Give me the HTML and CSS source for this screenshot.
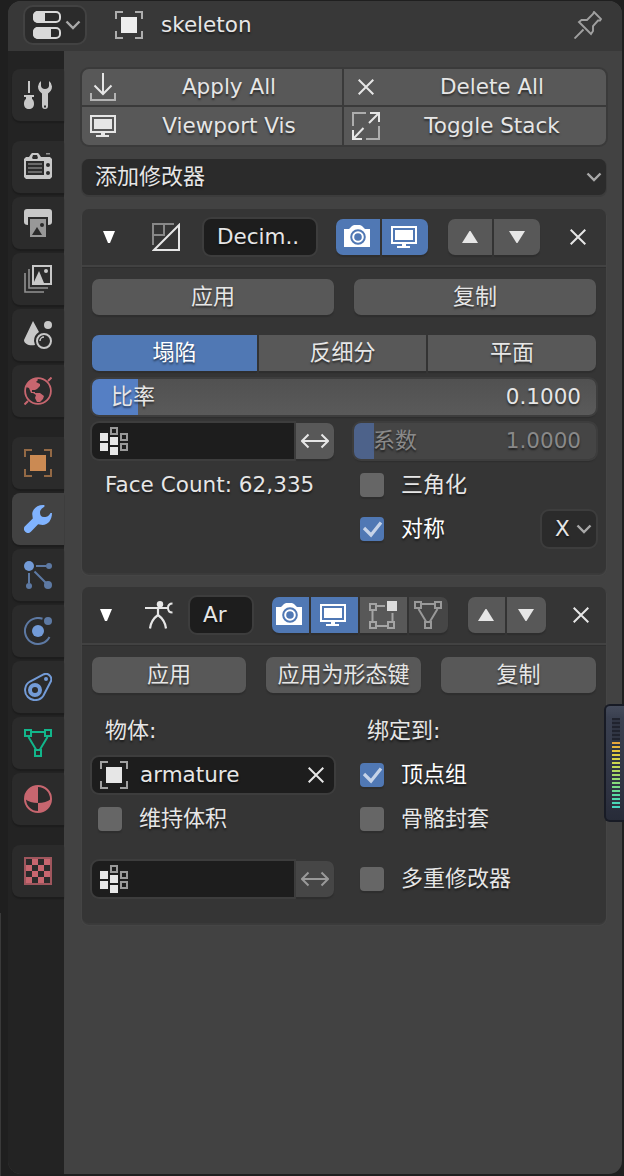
FILE: index.html
```html
<!DOCTYPE html>
<html lang="zh-CN">
<head>
<meta charset="utf-8">
<title>skeleton</title>
<link rel="stylesheet" href="styles.css">
</head>
<body>
<svg class="sprite" width="0" height="0">
  <symbol id="editor" viewBox="0 0 28 28"><rect x="1" y="1" width="26" height="10" rx="4" fill="none" stroke="#d9d9d9" stroke-width="2"/><path d="M5 0h7v12H5a5 5 0 0 1-5-5V5a5 5 0 0 1 5-5z" fill="#d9d9d9"/><rect x="1" y="17" width="26" height="10" rx="4" fill="none" stroke="#d9d9d9" stroke-width="2"/><path d="M5 16h13v12H5a5 5 0 0 1-5-5v-2a5 5 0 0 1 5-5z" fill="#d9d9d9"/></symbol>
  <symbol id="object" viewBox="0 0 28 28"><path d="M1 8V1h7M20 1h7v7M27 20v7h-7M8 27H1v-7" fill="none" stroke="currentColor" stroke-width="2" opacity=".65"/><path d="M6 6h16v16H6z" fill="currentColor"/></symbol>
  <symbol id="pin" viewBox="0 0 28 28"><path d="M20 1l7 7-1 1.500h-2L19 15v5l-2 3L5 11l2.500-2H13l6-6zM9.500 18.500L.5 27.500" fill="none" stroke="#a0a0a0" stroke-width="1.900"/></symbol>
  <symbol id="chev" viewBox="0 0 16 10"><path d="M1.500 1.500l6.500 6.500 6.500-6.500" fill="none" stroke="currentColor" stroke-width="2.400"/></symbol>
  <symbol id="tools" viewBox="0 0 28 28"><path d="M4 0h2v12H4zM0 14h10v2H8v2c1.500 1 2 2.500 2 5 0 3-2 5-5 5s-5-2-5-5c0-2.500.5-4 2-5v-2H0z"/><path fill-rule="evenodd" d="M17 0a7 7 0 0 0-3 5.500c0 3.500 1.500 5 4 7V25a3 3 0 0 0 6 0V12.500c2.500-2 4-3.500 4-7A7 7 0 0 0 25 0v4.500c0 2-1.500 3.500-4 3.500s-4-1.500-4-3.500zM20 24.500h2v2h-2z"/></symbol>
  <symbol id="render" viewBox="0 0 28 28"><path fill-rule="evenodd" d="M2 4h3l2-3 1-1h6l1 1 2 3h9l2 2v18l-2 2H2l-2-2V6zM9 2L8 5l1 1h4l1-1-1-3zM2 8v14h18V8z"/><path d="M22 0h4v1.500h-4z" opacity=".65"/><path d="M4 11h14M4 15h14M4 19h14" stroke="currentColor" stroke-width="1.800" opacity=".4"/><circle cx="24" cy="12" r="2" fill="#2b2b2b"/><circle cx="24" cy="20" r="2" fill="#2b2b2b"/></symbol>
  <symbol id="output" viewBox="0 0 28 28"><path d="M3 0h22a3 3 0 0 1 3 3v10q0 3-4 3V8H4v8q-4 0-4-3V3a3 3 0 0 1 3-3z"/><path d="M6 10h16v18H6z" opacity=".7"/><path d="M8 26l5-8 5 8z" fill="#2b2b2b"/><circle cx="18" cy="16" r="2" fill="#2b2b2b"/></symbol>
  <symbol id="layers" viewBox="0 0 28 28"><path d="M9 1h18v18H9z" fill="none" stroke="currentColor" stroke-width="2"/><path d="M9.500 18l5.500-12 5 12z"/><circle cx="22" cy="6" r="2"/><path d="M5 4v19h19M1 8v19h19" fill="none" stroke="currentColor" stroke-width="1.600" opacity=".65"/></symbol>
  <symbol id="scene" viewBox="0 0 28 28"><path d="M9 0l6 11q-5 3-5 9l1 4C5 25 0 23 0 19z"/><circle cx="24" cy="4" r="4"/><circle cx="20" cy="20" r="7" fill="none" stroke="currentColor" stroke-width="2"/><path d="M16 20a4 4 0 0 1 4-4" fill="none" stroke="currentColor" stroke-width="1.500"/></symbol>
  <symbol id="world" viewBox="0 0 28 28"><circle cx="14" cy="14" r="12.900" fill="none" stroke="currentColor" stroke-width="1.800"/><path d="M24 4l3.500-3.500M4 24L.5 27.500" stroke="currentColor" stroke-width="2"/><path d="M2 10C3 5 8 1 13 1.500l1 1.500-2 2 4 2v2l-3 3-2 1H8v2h3v1h5l4 3-1 3-3 3h-3l-2-4 1-3-3-2H7l-2-5z"/></symbol>
  <symbol id="wrench" viewBox="0 0 28 28"><path d="M20.500.2C14-.5 8.500 3.500 8.200 9l.6 4.500L1.200 21a4 4 0 0 0 5.700 5.700l7.200-7.500 4.400.7c5.500 0 9.500-5 9.500-12L26.500 8c-2 4-4.500 4-6.500 4-3 0-4-2-4-4.500 0-3 2-4 4.500-6z"/></symbol>
  <symbol id="particles" viewBox="0 0 28 28"><circle cx="5" cy="5" r="5"/><g opacity=".7"><circle cx="25" cy="5" r="3"/><circle cx="5" cy="25" r="3"/><circle cx="24" cy="24" r="4"/><path d="M12 5h10M5 12v10M10.500 10.500L22 22" stroke="currentColor" stroke-width="2"/></g></symbol>
  <symbol id="physics" viewBox="0 0 28 28"><circle cx="14" cy="14" r="6"/><g opacity=".7"><path d="M18.500 1.800A13 13 0 1 0 25.500 20" fill="none" stroke="currentColor" stroke-width="2"/><circle cx="24" cy="4" r="4"/></g></symbol>
  <symbol id="constraint" viewBox="0 0 28 28"><path d="M20 1.200L6 8.500A10 10 0 1 0 19.500 22.500L26.500 9A5.400 5.400 0 0 0 20 1.200z" fill="none" stroke="currentColor" stroke-width="2"/><circle cx="11" cy="17" r="5" fill="none" stroke="currentColor" stroke-width="4"/><circle cx="22" cy="6" r="2"/></symbol>
  <symbol id="mesh" viewBox="0 0 28 28"><path d="M1 1h6v6H1zM21 1h6v6h-6zM11 21h6v6h-6zM8 3h12M4.500 8L12 20.500M23.500 8L16 20.500" fill="none" stroke="currentColor" stroke-width="2"/></symbol>
  <symbol id="material" viewBox="0 0 28 28"><circle cx="14" cy="14" r="13" fill="none" stroke="currentColor" stroke-width="2"/><path d="M14 1v17Q6 18 1 14A13 13 0 0 1 14 1zM14 18q8 0 13-4a13 13 0 0 1-13 13z"/></symbol>
  <symbol id="texture" viewBox="0 0 28 28"><path d="M1 1h26v26H1z" fill="none" stroke="currentColor" stroke-width="2" opacity=".75"/><path d="M8 2h6v6H8zM20 2h6v6h-6zM2 8h6v6H2zM14 8h6v6h-6zM8 14h6v6H8zM20 14h6v6h-6zM2 20h6v6H2zM14 20h6v6h-6z"/></symbol>
  <symbol id="import" viewBox="0 0 28 28"><path d="M13 0v21M4.500 12.500L13 21l8.500-8.500" fill="none" stroke="currentColor" stroke-width="2"/><path d="M1 20v7h24v-7" fill="none" stroke="currentColor" stroke-width="2" opacity=".65"/></symbol>
  <symbol id="screen" viewBox="0 0 28 28"><path d="M1 4h24v16H1z" fill="none" stroke="currentColor" stroke-width="2"/><path d="M4 7h18v10H4zM11 20h4v3h4v2H6v-2h5z"/></symbol>
  <symbol id="expand" viewBox="0 0 28 28"><path d="M1 14V1h13M27 14v13H14" fill="none" stroke="currentColor" stroke-width="2" opacity=".6"/><path d="M18 1h9v9M27 1L17 11M1 18v9h9M1 27l10.500-11" fill="none" stroke="currentColor" stroke-width="2"/></symbol>
  <symbol id="close" viewBox="0 0 16 16"><path d="M.7.7l14.600 14.600M15.300.7L.7 15.300" fill="none" stroke="currentColor" stroke-width="2"/></symbol>
  <symbol id="decimate" viewBox="0 0 28 28"><path d="M22 1H1v21M12 1v11H1" fill="none" stroke="#888" stroke-width="2"/><path d="M27 2v25H2z" fill="none" stroke="currentColor" stroke-width="2"/></symbol>
  <symbol id="armature" viewBox="0 0 28 28"><circle cx="15" cy="3.200" r="3.200"/><path d="M0 7h19M13 8v6q-7 5-8 13.500M13 14q7 5 8 13.500" fill="none" stroke="currentColor" stroke-width="2.200"/><path d="M27.500 2.500q-4.500 0-4.500 4.500t4.500 4.500M18 7h5" fill="none" stroke="currentColor" stroke-width="2"/></symbol>
  <symbol id="camera" viewBox="0 0 28 28"><path d="M0 6h5l3-3 2-1h6l2 1 3 3h5v18H0z"/><circle cx="14" cy="14" r="6.800" fill="none" stroke="#5078b4" stroke-width="2"/><circle cx="14" cy="14" r="3.800" fill="#5078b4"/></symbol>
  <symbol id="editmode" viewBox="0 0 28 28"><path d="M1 3h6v6H1zM1 21h6v6H1zM19 21h6v6h-6zM8 5h8M3.500 10v10M8 25h10M23.500 12v8" fill="none" stroke="#a4a4a4" stroke-width="2"/><path d="M18 0h10v10H18z" fill="#ddd"/></symbol>
  <symbol id="vgroup" viewBox="0 0 28 28"><path d="M0 6h8v8H0zM0 16h8v8H0zM10 10h8v8h-8zM10 20h8v8h-8z"/><path d="M11 1h6v6h-6zM21 7h6v6h-6zM21 17h6v6h-6z" fill="none" stroke="#999" stroke-width="2"/></symbol>
  <symbol id="swap" viewBox="0 0 28 28"><path d="M1 14h26M7.500 7.500L1 14l6.500 6.500M20.500 7.500L27 14l-6.500 6.500" fill="none" stroke="currentColor" stroke-width="2"/></symbol>
  <symbol id="fold" viewBox="0 0 12 12"><path d="M0 0h12L7 12H5z"/></symbol>
  <symbol id="down" viewBox="0 0 16 12"><path d="M0 0h16L8.500 12h-1z"/></symbol>
  <symbol id="up" viewBox="0 0 16 12"><path d="M7.500 0h1L16 12H0z"/></symbol>
  <symbol id="check" viewBox="0 0 24 24"><path d="M4 11l7 7L21 5.500" fill="none" stroke="#c6d3e8" stroke-width="3.200"/></symbol>
</svg>

<div class="window">
  <header class="topbar">
    <div class="editor-select"><svg class="icon"><use href="#editor"/></svg><svg class="chev"><use href="#chev"/></svg></div>
    <svg class="icon crumb-icon"><use href="#object"/></svg>
    <span class="crumb latin">skeleton</span>
    <svg class="icon"><use href="#pin"/></svg>
  </header>
  <div class="body">
    <nav class="tabs">
      <div class="tab"><svg class="icon"><use href="#tools"/></svg></div>
      <div class="tab gap"><svg class="icon"><use href="#render"/></svg></div>
      <div class="tab"><svg class="icon"><use href="#output"/></svg></div>
      <div class="tab"><svg class="icon"><use href="#layers"/></svg></div>
      <div class="tab"><svg class="icon"><use href="#scene"/></svg></div>
      <div class="tab red"><svg class="icon"><use href="#world"/></svg></div>
      <div class="tab gap orange"><svg class="icon"><use href="#object"/></svg></div>
      <div class="tab active"><svg class="icon"><use href="#wrench"/></svg></div>
      <div class="tab blue"><svg class="icon"><use href="#particles"/></svg></div>
      <div class="tab blue"><svg class="icon"><use href="#physics"/></svg></div>
      <div class="tab blue"><svg class="icon"><use href="#constraint"/></svg></div>
      <div class="tab green"><svg class="icon"><use href="#mesh"/></svg></div>
      <div class="tab red"><svg class="icon"><use href="#material"/></svg></div>
      <div class="tab gap red"><svg class="icon"><use href="#texture"/></svg></div>
    </nav>
    <main class="content">
      <div class="actions">
        <div class="action"><svg class="icon"><use href="#import"/></svg><span class="latin">Apply All</span></div>
        <div class="action"><svg class="icon"><svg x="6" y="6" width="16" height="16"><use href="#close"/></svg></svg><span class="latin">Delete All</span></div>
        <div class="action"><svg class="icon"><use href="#screen"/></svg><span class="latin">Viewport Vis</span></div>
        <div class="action"><svg class="icon"><use href="#expand"/></svg><span class="latin">Toggle Stack</span></div>
      </div>
      <div class="add-modifier"><span>添加修改器</span><svg class="chev"><use href="#chev"/></svg></div>

      <section class="panel decimate">
        <div class="panel-head">
          <svg class="fold"><use href="#fold"/></svg>
          <svg class="icon type"><use href="#decimate"/></svg>
          <div class="field name latin">Decim..</div>
          <div class="group modes"><div class="btn on"><svg class="icon"><use href="#camera"/></svg></div><div class="btn on"><svg class="icon"><use href="#screen"/></svg></div></div>
          <div class="group order"><div class="btn"><svg class="arrow"><use href="#up"/></svg></div><div class="btn"><svg class="arrow"><use href="#down"/></svg></div></div>
          <svg class="close"><use href="#close"/></svg>
        </div>
        <div class="panel-body">
          <div class="row halves"><div class="btn solo">应用</div><div class="btn solo">复制</div></div>
          <div class="group method"><div class="btn on">塌陷</div><div class="btn">反细分</div><div class="btn">平面</div></div>
          <div class="slider ratio"><span>比率</span><span class="latin">0.1000</span></div>
          <div class="row halves weights">
            <div class="group vg"><div class="field"><svg class="icon"><use href="#vgroup"/></svg></div><div class="btn"><svg class="icon"><use href="#swap"/></svg></div></div>
            <div class="slider factor"><span>系数</span><span class="latin">1.0000</span></div>
          </div>
          <div class="row halves line"><div class="caption latin count">Face Count: 62,335</div><div class="option"><i class="box"></i><span>三角化</span></div></div>
          <div class="row halves line"><div></div><div class="option"><i class="box on"><svg><use href="#check"/></svg></i><span class="bright">对称</span><div class="axis"><span class="latin">X</span><svg class="chev"><use href="#chev"/></svg></div></div></div>
        </div>
      </section>

      <section class="panel arm">
        <div class="panel-head">
          <svg class="fold"><use href="#fold"/></svg>
          <svg class="icon type"><use href="#armature"/></svg>
          <div class="field name latin">Ar</div>
          <div class="group modes"><div class="btn on"><svg class="icon"><use href="#camera"/></svg></div><div class="btn on"><svg class="icon"><use href="#screen"/></svg></div><div class="btn"><svg class="icon"><use href="#editmode"/></svg></div><div class="btn dim"><svg class="icon"><use href="#mesh"/></svg></div></div>
          <div class="group order"><div class="btn"><svg class="arrow"><use href="#up"/></svg></div><div class="btn"><svg class="arrow"><use href="#down"/></svg></div></div>
          <svg class="close"><use href="#close"/></svg>
        </div>
        <div class="panel-body">
          <div class="row thirds"><div class="btn solo">应用</div><div class="btn solo">应用为形态键</div><div class="btn solo">复制</div></div>
          <div class="row halves labels"><div class="caption">物体:</div><div class="caption">绑定到:</div></div>
          <div class="row halves line">
            <div class="field target"><svg class="icon"><use href="#object"/></svg><span class="latin">armature</span><svg class="close"><use href="#close"/></svg></div>
            <div class="option"><i class="box on"><svg><use href="#check"/></svg></i><span class="bright">顶点组</span></div>
          </div>
          <div class="row halves line"><div class="option"><i class="box"></i><span>维持体积</span></div><div class="option"><i class="box"></i><span>骨骼封套</span></div></div>
          <div class="row halves line multi">
            <div class="group vg"><div class="field"><svg class="icon"><use href="#vgroup"/></svg></div><div class="btn dim"><svg class="icon"><use href="#swap"/></svg></div></div>
            <div class="option"><i class="box"></i><span>多重修改器</span></div>
          </div>
        </div>
      </section>
    </main>
  </div>
</div>
<div class="meter"><div class="bars"></div></div>
</body>
</html>
```
FILE: styles.css
```css
* { box-sizing: border-box; }
body {
  margin: 0;
  width: 624px;
  height: 1176px;
  padding: 1px 2px 2px 8px;
  overflow: hidden;
  background: linear-gradient(#3a3a3a, #3a3a3a) 0 913px / 1px 263px no-repeat, #1f1f1f;
  font: 22px/36px "DejaVu Sans", "Noto Sans CJK SC", sans-serif;
  color: #e6e6e6;
  text-shadow: 0 2px 2px rgba(0, 0, 0, .5);
}
svg { display: block; flex: none; fill: currentColor; }
.sprite { position: absolute; }
.icon { width: 28px; height: 28px; }
.chev { width: 16px; height: 10px; color: #a8a8a8; }
.close { width: 16px; height: 16px; }
.latin { font-size: 21.5px; }

.window {
  height: 1173px;
  display: flex;
  flex-direction: column;
  border-radius: 13px;
  overflow: hidden;
  background: #424242;
}
.topbar {
  flex: none;
  height: 50px;
  display: flex;
  align-items: center;
  padding: 0 20px 2px 15px;
  background: #383838;
}
.editor-select {
  width: 64px;
  height: 40px;
  display: flex;
  align-items: center;
  justify-content: space-between;
  padding: 0 4px 0 8px;
  border: 2px solid #424242;
  border-radius: 10px;
  background: #2b2b2b;
}
.crumb-icon { margin: 0 18px 0 28px; color: #eee; }
.crumb { flex: 1; }
.body { flex: 1; display: flex; }

.tabs { width: 56px; padding: 18px 0 0 4px; background: #232323; }
.tab {
  height: 52px;
  margin-bottom: 4px;
  padding: 12px;
  border-radius: 8px 0 0 8px;
  background: #2b2b2b;
  box-shadow: 0 2px 1px #1d1d1d;
  color: #c8c8c8;
}
.tab.gap { margin-top: 20px; }
.tab.red { color: #c7666f; }
.tab.orange { color: #cb8a53; }
.tab.blue { color: #739bd7; }
.tab.green { color: #12b68b; }
.tab.active { background: #424242; color: #80b3ff; }

.content { flex: 1; padding: 18px 16px 0 18px; }
.actions {
  display: grid;
  grid-template: 36px 38px / 260px 262px;
  gap: 2px;
  border-radius: 7px;
  overflow: hidden;
  background: #3a3a3a;
  box-shadow: 0 0 0 2px #3a3a3a;
}
.action { display: flex; align-items: center; padding-left: 8px; background: #585858; }
.action span { flex: 1; text-align: center; padding-right: 2px; }
.add-modifier {
  height: 36px;
  margin: 14px 0;
  display: flex;
  align-items: center;
  justify-content: space-between;
  padding: 0 4px 0 13px;
  border-radius: 7px;
  background: #2b2b2b;
  box-shadow: 0 1px 0 1px #3c3c3c;
}

.panel { border-radius: 7px; background: #353535; box-shadow: 0 2px 1px #3a3a3a, 0 2px 0 1px #484848; }
.decimate { height: 364px; margin-bottom: 14px; }
.arm { height: 336px; }
.panel-head {
  height: 58px;
  display: flex;
  align-items: center;
  border-bottom: 2px solid #424242;
  box-shadow: 0 1px 0 #2f2f2f;
}
.fold { width: 12px; height: 12px; margin-left: 21px; color: #fff; }
.type { margin-left: 37px; }
.field {
  height: 36px;
  border-radius: 7px;
  background: #1d1d1d;
  box-shadow: 0 0 0 2px #3d3d3d;
}
.name { width: 112px; margin: 0 20px 0 24px; padding-left: 13px; }
.group { display: flex; gap: 2px; height: 36px; }
.group > .btn:first-child { border-radius: 7px 0 0 7px; }
.group > .btn:last-child { border-radius: 0 7px 7px 0; }
.btn {
  flex: 1;
  display: flex;
  align-items: center;
  justify-content: center;
  background: #585858;
  box-shadow: 0 2px 1px #2e2e2e;
}
.solo { border-radius: 7px; }
.btn.on { background: #5078b4; color: #fff; }
.btn.dim { background: #464646; color: #999; }
.arrow { width: 16px; height: 12px; }
.decimate .modes, .decimate .order { display: grid; grid-template-columns: 44px 46px; margin-right: 20px; }
.decimate .panel-head .close { margin-left: 10px; }
.panel-head .btn { padding-right: 1px; }
.arm .fold { margin-left: 18px; }
.arm .type { margin-left: 33px; }
.arm .name { width: 62px; margin-left: 17px; }
.arm .modes { display: grid; grid-template-columns: 37px 47px 47px 39px; margin-right: 20px; }
.arm .order { display: grid; grid-template-columns: 37px 39px; margin-right: 27px; }

.panel-body { padding: 12px 10px; }
.row { display: grid; height: 36px; }
.halves { grid-template-columns: 242px 242px; gap: 20px; }
.thirds { grid-template-columns: 154px 155px 155px; gap: 20px; }
.method { margin: 20px 0 8px; display: grid; grid-template-columns: 165px 167px 168px; }
.slider {
  height: 36px;
  display: flex;
  justify-content: space-between;
  padding: 0 15px 0 19px;
  border-radius: 7px;
  box-shadow: 0 0 0 2px #3d3d3d, 0 3px 1px #2e2e2e;
}
.ratio { background: linear-gradient(90deg, #557fc4 46px, transparent 46px), linear-gradient(#515151, #5a5a5a); }
.factor { background: linear-gradient(90deg, #4d628a 20px, #454545 20px); color: #898989; }
.weights, .line { margin-top: 8px; }
.vg .field { width: 202px; padding: 4px 8px; border-radius: 7px 0 0 7px; }
.vg .btn { border-radius: 0 7px 7px 0; }
.caption { padding-left: 13px; }
.count { letter-spacing: .04px; }
.option { display: flex; align-items: center; padding-left: 6px; }
.option > span { margin-left: 17px; }
.bright { color: #fff; }
.box { width: 24px; height: 24px; border-radius: 4px; background: #666; box-shadow: 0 2px 1px #2e2e2e; }
.box.on { background: #5078b4; }
.box svg { width: 24px; height: 24px; }
.axis {
  width: 54px;
  height: 36px;
  margin-left: auto;
  display: flex;
  align-items: center;
  justify-content: space-between;
  padding: 0 4px 0 13px;
  border-radius: 7px;
  background: #2b2b2b;
  box-shadow: 0 0 0 2px #3d3d3d;
}
.labels { margin-top: 20px; }
.target { display: flex; align-items: center; padding: 0 10px 0 8px; }
.target span { flex: 1; margin-left: 12px; }
.multi { margin-top: 24px; }

.meter {
  position: absolute;
  left: 604px;
  top: 704px;
  width: 20px;
  height: 118px;
  padding: 12px 4px 0 6px;
  border: 2px solid #181b25;
  border-right: 0;
  border-radius: 6px 0 0 6px;
  background: linear-gradient(#454b5b, #3a4050 10%, #2d3140 80%, #272b38);
}
.bars {
  width: 8px;
  height: 90px;
  background:
    repeating-linear-gradient(transparent 0 2px, #303543 2px 4px),
    linear-gradient(#20232e 24px, #e8a33a 24px, #e6c83b 34px, #cbd84f 46px, #8bdc78 64px, #52dba5 78px, #45d6c4);
}
```
